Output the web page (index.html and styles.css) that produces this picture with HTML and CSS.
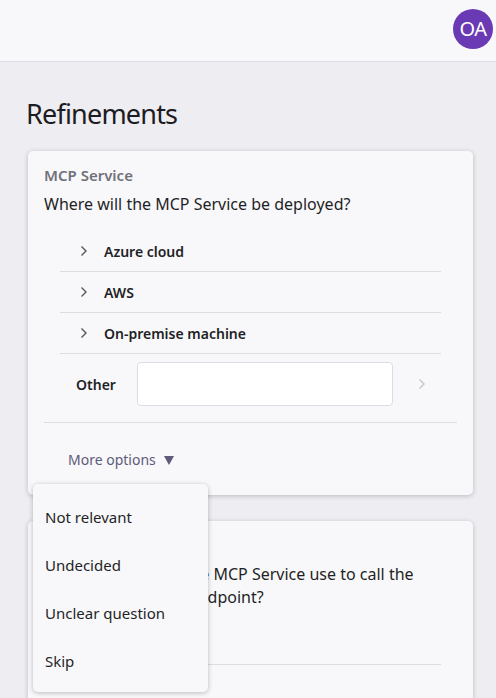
FILE: index.html
```html
<!DOCTYPE html>
<html>
<head>
<meta charset="utf-8">
<link rel="stylesheet" href="styles.css">
</head>
<body>
<header class="topbar">
  <div class="avatar">OA</div>
</header>
<main class="page">
  <h1 class="title">Refinements</h1>
  <section class="card">
    <div class="card-label">MCP Service</div>
    <div class="question">Where will the MCP Service be deployed?</div>
    <ul class="options">
      <li class="option"><svg class="chev" viewBox="0 0 8 12" width="8" height="12"><path d="M1.5 1.5 L6 6 L1.5 10.5" fill="none" stroke="#55555e" stroke-width="1.4"/></svg><span>Azure cloud</span></li>
      <li class="option"><svg class="chev" viewBox="0 0 8 12" width="8" height="12"><path d="M1.5 1.5 L6 6 L1.5 10.5" fill="none" stroke="#55555e" stroke-width="1.4"/></svg><span>AWS</span></li>
      <li class="option"><svg class="chev" viewBox="0 0 8 12" width="8" height="12"><path d="M1.5 1.5 L6 6 L1.5 10.5" fill="none" stroke="#55555e" stroke-width="1.4"/></svg><span>On-premise machine</span></li>
      <li class="other">
        <span class="other-label">Other</span>
        <div class="other-input"></div>
        <svg class="chev light" viewBox="0 0 8 12" width="8" height="12"><path d="M1.5 1.5 L6 6 L1.5 10.5" fill="none" stroke="#c4c4cc" stroke-width="1.4"/></svg>
      </li>
    </ul>
    <div class="more-wrap">
      <button class="more">More options <svg class="caret" viewBox="0 0 10 9" width="10" height="9"><path d="M0 0 H10 L5 9 Z" fill="#5e5a78"/></svg></button>
      <div class="menu">
        <div class="menu-item">Not relevant</div>
        <div class="menu-item">Undecided</div>
        <div class="menu-item">Unclear question</div>
        <div class="menu-item">Skip</div>
      </div>
    </div>
  </section>
  <section class="card">
    <div class="card-label">MCP Service</div>
    <div class="question">Which identity will the MCP Service use to call the Azure OpenAI chat endpoint?</div>
    <ul class="options">
      <li class="option"><svg class="chev" viewBox="0 0 8 12" width="8" height="12"><path d="M1.5 1.5 L6 6 L1.5 10.5" fill="none" stroke="#55555e" stroke-width="1.4"/></svg><span>API key</span></li>
      <li class="option"><svg class="chev" viewBox="0 0 8 12" width="8" height="12"><path d="M1.5 1.5 L6 6 L1.5 10.5" fill="none" stroke="#55555e" stroke-width="1.4"/></svg><span>Entra ID</span></li>
    </ul>
  </section>
</main>
</body>
</html>
```

FILE: styles.css
```css
* { box-sizing: border-box; }
html, body { margin: 0; height: 100%; }
body {
  font-family: "Noto Sans", "Open Sans", sans-serif;
  background: #eeedf2;
  color: #1f1f26;
  overflow: hidden;
}
.topbar {
  height: 62px;
  background: #f8f8fa;
  border-bottom: 1px solid #dedde4;
  display: flex;
  justify-content: flex-end;
  align-items: center;
  padding: 0 3px 4px 0;
}
.avatar {
  width: 40px;
  height: 40px;
  border-radius: 50%;
  background: #6a3ab5;
  color: #fff;
  display: flex;
  align-items: center;
  justify-content: center;
  font-size: 20px;
  letter-spacing: -0.5px;
}
.page {
  padding: 0 23px 0 28px;
}
.title {
  margin: 33px 0 18px -2px;
  font-size: 27px;
  letter-spacing: -0.8px;
  font-weight: 400;
  line-height: 38px;
  color: #1c1c22;
}
.card {
  background: #f8f8fa;
  border-radius: 5px;
  box-shadow: 0 1px 5px rgba(0,0,0,0.22);
  padding: 13px 16px 16px;
  margin-bottom: 26px;
}
.card-label {
  font-size: 15px;
  font-weight: 600;
  color: #71717a;
  line-height: 22px;
}
.question {
  font-size: 16px;
  line-height: 23px;
  margin-top: 7px;
  color: #1f1f26;
}
.options {
  list-style: none;
  margin: 15px 16px 0;
  padding: 0;
}
.option {
  height: 41px;
  display: flex;
  align-items: center;
  gap: 16px;
  padding-left: 20px;
  font-size: 14px;
  font-weight: 600;
  border-bottom: 1px solid #dedde4;
}
.chev { flex: none; }
.other {
  display: flex;
  align-items: center;
  padding: 0 0 16px 16px;
  font-size: 14px;
  font-weight: 600;
  margin-top: 8px;
  height: 60px;
}
.other-label { width: 61px; }
.other-input {
  width: 256px;
  height: 44px;
  background: #fff;
  border: 1px solid #dcdce4;
  border-radius: 4px;
}
.chev.light { margin-left: 25px; }
.more-wrap {
  position: relative;
  border-top: 1px solid #dedde4;
  padding: 26px 0 8px 24px;
}
.more {
  background: none;
  border: none;
  padding: 0;
  font-family: inherit;
  font-size: 14px;
  color: #5e5a78;
  display: flex;
  align-items: center;
  gap: 8px;
  line-height: 22px;
}
.caret { flex: none; margin-top: 1px; }
.menu {
  position: absolute;
  left: -11px;
  top: 61px;
  width: 175px;
  background: #f8f8fa;
  border-radius: 5px;
  box-shadow: 0 1px 5px rgba(0,0,0,0.25);
  padding: 9px 0 7px;
  z-index: 5;
}
.menu-item {
  height: 48px;
  display: flex;
  align-items: center;
  padding-left: 12px;
  font-size: 15px;
  color: #1f1f26;
}
```
